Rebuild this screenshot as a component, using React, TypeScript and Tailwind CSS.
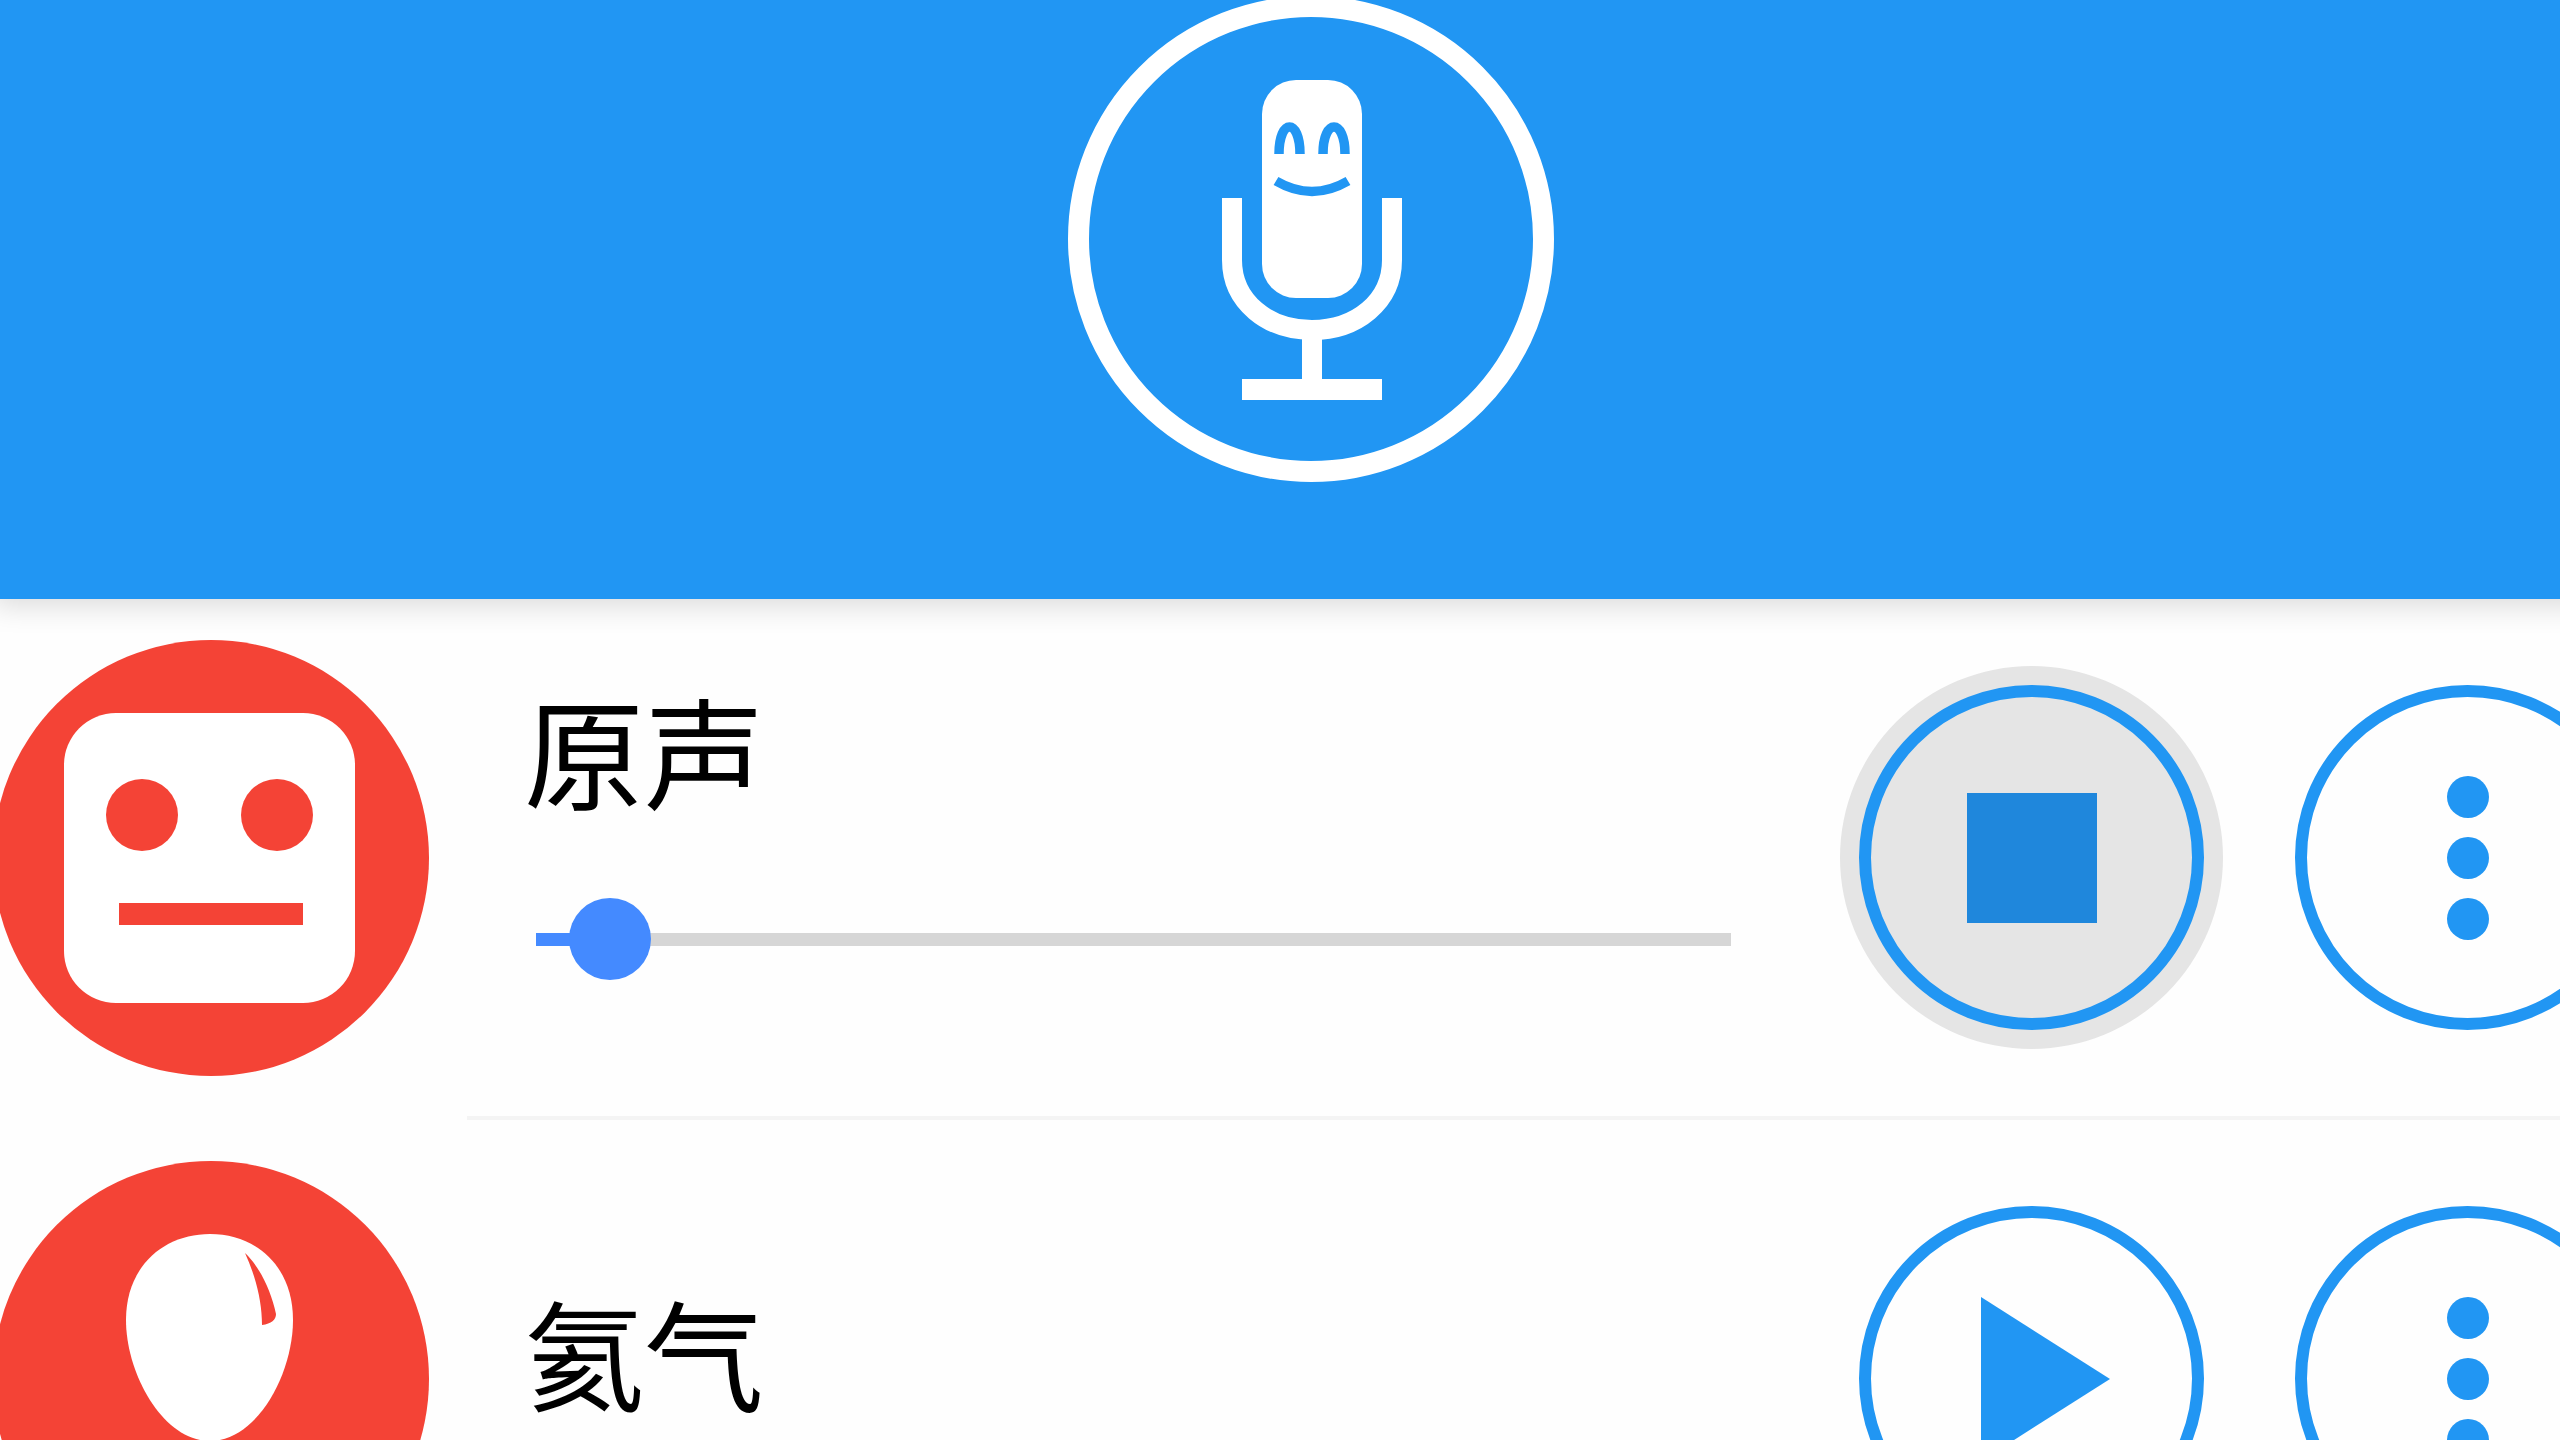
import { useState } from 'react'

const voices = [
  { id: 'original', name: '原声' },
  { id: 'helium', name: '氦气' },
]

function MicIcon() {
  return (
    <svg viewBox="0 0 486 486" className="size-[486px]" fill="none" aria-hidden="true">
      <circle cx="243" cy="243" r="232.5" stroke="#fff" strokeWidth="21" />
      <rect x="194" y="84" width="100" height="218" rx="34" fill="#fff" />
      <g stroke="#2196f3" strokeWidth="9.5">
        <path d="M211 158C211 122 232 122 232 158" />
        <path d="M255 158C255 122 277 122 277 158" />
        <path d="M208 185Q244 206 280 185" />
      </g>
      <path d="M164 202V264C164 306 200 334 244 334S324 306 324 264V202" stroke="#fff" strokeWidth="20" />
      <path d="M234 334h20v49h60v21H174v-21h60z" fill="#fff" />
    </svg>
  )
}

function RobotAvatar() {
  return (
    <svg viewBox="0 0 436 436" className="size-[436px] shrink-0" aria-hidden="true">
      <circle cx="218" cy="218" r="218" fill="#f44336" />
      <rect x="71" y="73" width="291" height="290" rx="52" fill="#fff" />
      <circle cx="149" cy="175" r="36" fill="#f44336" />
      <circle cx="284" cy="175" r="36" fill="#f44336" />
      <rect x="126" y="263" width="184" height="22" fill="#f44336" />
    </svg>
  )
}

function BalloonAvatar() {
  return (
    <svg viewBox="0 0 436 436" className="size-[436px] shrink-0" aria-hidden="true">
      <circle cx="218" cy="218" r="218" fill="#f44336" />
      <path
        d="M217 73C263 73 300 105 300 159C300 213 264 280 217 280S133 213 133 159C133 105 171 73 217 73Z"
        fill="#fff"
      />
      <path d="M252 92C266 105 278 129 283 153Q283 162 269 164C269 141 263 116 252 92Z" fill="#f44336" />
    </svg>
  )
}

function PlayButton({ playing, onClick }: { playing: boolean; onClick: () => void }) {
  return (
    <button
      type="button"
      onClick={onClick}
      aria-label={playing ? '停止' : '播放'}
      className={
        playing
          ? 'flex size-[345px] shrink-0 items-center justify-center rounded-full border-12 border-[#2196f3] bg-[#e5e5e5] ring-[19px] ring-[#e5e5e5]'
          : 'flex size-[345px] shrink-0 items-center justify-center rounded-full border-12 border-[#2196f3]'
      }
    >
      {playing ? (
        <span className="size-[130px] bg-[#1f87dc]" />
      ) : (
        <svg viewBox="0 0 240 240" className="size-[240px]" aria-hidden="true">
          <path d="M69 38L198 120L69 202Z" fill="#2196f3" />
        </svg>
      )}
    </button>
  )
}

function MoreButton() {
  return (
    <button
      type="button"
      aria-label="更多"
      className="flex size-[345px] shrink-0 flex-col items-center justify-center gap-[19px] rounded-full border-12 border-[#2196f3]"
    >
      <span className="size-[42px] rounded-full bg-[#2196f3]" />
      <span className="size-[42px] rounded-full bg-[#2196f3]" />
      <span className="size-[42px] rounded-full bg-[#2196f3]" />
    </button>
  )
}

export default function App() {
  const [playingId, setPlayingId] = useState<string | null>('original')
  const [position, setPosition] = useState(3)

  return (
    <div className="h-screen overflow-hidden bg-[#fefefe] font-['Noto_Sans_CJK_SC',sans-serif] text-black">
      <div className="-ml-[7px] -mr-20">
        <header className="relative flex h-[599px] items-start justify-center bg-[#2196f3] pr-3 shadow-[0_6px_28px_rgba(0,0,0,0.15)]">
          <button type="button" aria-label="录音" className="-mt-1 rounded-full">
            <MicIcon />
          </button>
        </header>

        <ul>
          {voices.map((voice) => {
            const playing = voice.id === playingId
            return (
              <li key={voice.id}>
                <div className="flex h-[517px] items-center">
                  {voice.id === 'original' ? <RobotAvatar /> : <BalloonAvatar />}

                  <div className="ml-[95px] flex min-w-0 flex-1 flex-col pb-14">
                    <label htmlFor={voice.id} className="text-[120px] leading-[140px]">
                      {voice.name}
                    </label>
                    {playing && (
                      <input
                        id={voice.id}
                        type="range"
                        min={0}
                        max={100}
                        value={position}
                        onChange={(e) => setPosition(Number(e.target.value))}
                        className="mt-20 ml-3 h-[82px] appearance-none bg-transparent [&::-webkit-slider-runnable-track]:h-[13px] [&::-webkit-slider-runnable-track]:bg-[linear-gradient(to_right,#448aff_5%,#d6d6d6_5%)] [&::-webkit-slider-thumb]:-mt-[35px] [&::-webkit-slider-thumb]:size-[82px] [&::-webkit-slider-thumb]:appearance-none [&::-webkit-slider-thumb]:rounded-full [&::-webkit-slider-thumb]:bg-[#448aff]"
                      />
                    )}
                  </div>

                  <div className="ml-32 flex gap-[91px]">
                    <PlayButton playing={playing} onClick={() => setPlayingId(playing ? null : voice.id)} />
                    <MoreButton />
                  </div>
                </div>
                <div className="ml-[474px] h-1 bg-[#f4f4f4]" />
              </li>
            )
          })}
        </ul>
      </div>
    </div>
  )
}
